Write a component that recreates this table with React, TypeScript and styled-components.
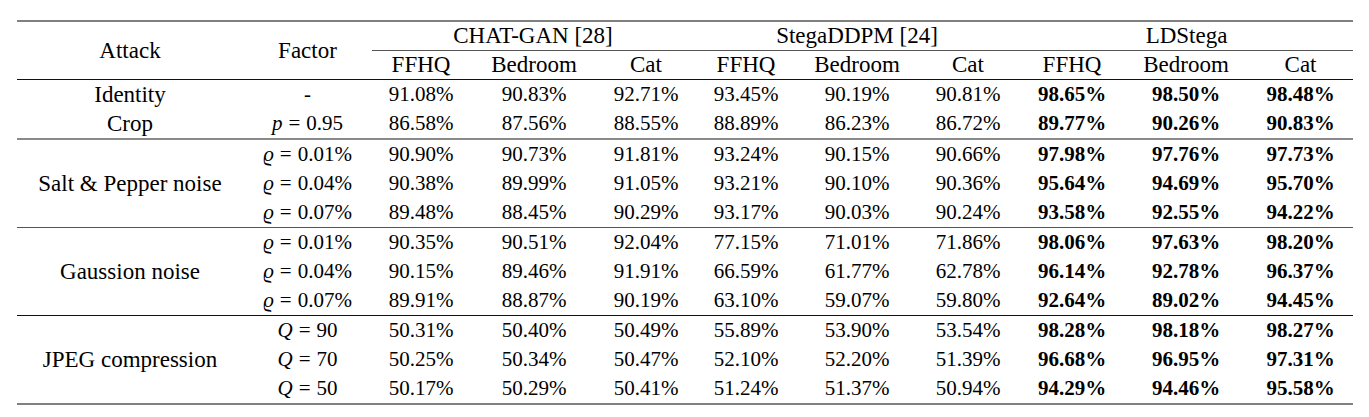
import React from "react";
import styled, { createGlobalStyle, css } from "styled-components";

const GlobalStyle = createGlobalStyle`
  html, body {
    margin: 0;
    padding: 0;
    background: #ffffff;
  }
  body {
    font-family: "Liberation Serif", "DejaVu Serif", serif;
    color: #000;
  }
`;

type Rule = "thickGray" | "thinGray" | "black";

interface Factor {
  v?: string;
  rest?: string;
}

interface Group {
  attack: string;
  rule: Rule;
  rows: { factor: Factor; values: string[] }[];
}

const colWidths = [226, 129, 98, 128, 96, 104, 118, 104, 104, 124, 105];

const methods = ["CHAT-GAN [28]", "StegaDDPM [24]", "LDStega"];
const datasets = ["FFHQ", "Bedroom", "Cat"];

const groups: Group[] = [
  {
    attack: "",
    rule: "black",
    rows: [
      { factor: {}, values: ["91.08%", "90.83%", "92.71%", "93.45%", "90.19%", "90.81%", "98.65%", "98.50%", "98.48%"] },
      { factor: { v: "p", rest: "0.95" }, values: ["86.58%", "87.56%", "88.55%", "88.89%", "86.23%", "86.72%", "89.77%", "90.26%", "90.83%"] },
    ],
  },
  {
    attack: "Salt & Pepper noise",
    rule: "thickGray",
    rows: [
      { factor: { v: "ϱ", rest: "0.01%" }, values: ["90.90%", "90.73%", "91.81%", "93.24%", "90.15%", "90.66%", "97.98%", "97.76%", "97.73%"] },
      { factor: { v: "ϱ", rest: "0.04%" }, values: ["90.38%", "89.99%", "91.05%", "93.21%", "90.10%", "90.36%", "95.64%", "94.69%", "95.70%"] },
      { factor: { v: "ϱ", rest: "0.07%" }, values: ["89.48%", "88.45%", "90.29%", "93.17%", "90.03%", "90.24%", "93.58%", "92.55%", "94.22%"] },
    ],
  },
  {
    attack: "Gaussion noise",
    rule: "thinGray",
    rows: [
      { factor: { v: "ϱ", rest: "0.01%" }, values: ["90.35%", "90.51%", "92.04%", "77.15%", "71.01%", "71.86%", "98.06%", "97.63%", "98.20%"] },
      { factor: { v: "ϱ", rest: "0.04%" }, values: ["90.15%", "89.46%", "91.91%", "66.59%", "61.77%", "62.78%", "96.14%", "92.78%", "96.37%"] },
      { factor: { v: "ϱ", rest: "0.07%" }, values: ["89.91%", "88.87%", "90.19%", "63.10%", "59.07%", "59.80%", "92.64%", "89.02%", "94.45%"] },
    ],
  },
  {
    attack: "JPEG compression",
    rule: "black",
    rows: [
      { factor: { v: "Q", rest: "90" }, values: ["50.31%", "50.40%", "50.49%", "55.89%", "53.90%", "53.54%", "98.28%", "98.18%", "98.27%"] },
      { factor: { v: "Q", rest: "70" }, values: ["50.25%", "50.34%", "50.47%", "52.10%", "52.20%", "51.39%", "96.68%", "96.95%", "97.31%"] },
      { factor: { v: "Q", rest: "50" }, values: ["50.17%", "50.29%", "50.41%", "51.24%", "51.37%", "50.94%", "94.29%", "94.46%", "95.58%"] },
    ],
  },
];

const ruleStyles: Record<Rule, ReturnType<typeof css>> = {
  thickGray: css`border-top: 2px solid #8a8a8a;`,
  thinGray: css`border-top: 1px solid #555555;`,
  black: css`border-top: 1px solid #111111;`,
};

const Page = styled.div`
  padding: 20px 16px 11px 17px;
`;

const Table = styled.table`
  border-collapse: collapse;
  table-layout: fixed;
  width: 1336px;
  font-family: "Liberation Serif", "DejaVu Serif", serif;
  color: #000;
  border-top: 2px solid #808080;
  border-bottom: 2px solid #808080;
`;

const HeadCell = styled.th<{ $underline?: boolean }>`
  font-weight: normal;
  font-size: 23px;
  height: 28px;
  line-height: 28px;
  padding: 0;
  text-align: center;
  white-space: nowrap;
  ${(p) => p.$underline && css`border-bottom: 1px solid #555555;`}
`;

const Body = styled.tbody<{ $rule: Rule }>`
  ${(p) => ruleStyles[p.$rule]}
`;

const Row = styled.tr``;

const AttackCell = styled.td`
  font-size: 23px;
  text-align: center;
  vertical-align: middle;
  padding: 0;
  white-space: nowrap;
`;

const FactorCell = styled.td`
  font-size: 21px;
  height: 29px;
  line-height: 29px;
  text-align: center;
  padding: 0;
  white-space: nowrap;
`;

const ValueCell = styled.td<{ $best?: boolean }>`
  font-size: 21px;
  height: 29px;
  line-height: 29px;
  text-align: center;
  padding: 0;
  white-space: nowrap;
  font-weight: ${(p) => (p.$best ? 700 : 400)};
`;

const Var = styled.i`
  font-style: italic;
`;

const Eq = styled.span`
  padding: 0 6px;
`;

const FactorText = ({ factor }: { factor: Factor }) => {
  if (!factor.v) return <>-</>;
  return (
    <>
      <Var>{factor.v}</Var>
      <Eq>=</Eq>
      {factor.rest}
    </>
  );
};

export default function App() {
  return (
    <>
      <GlobalStyle />
      <Page>
        <Table>
          <colgroup>
            {colWidths.map((w, i) => (
              <col key={i} style={{ width: w }} />
            ))}
          </colgroup>
          <thead>
            <tr>
              <HeadCell rowSpan={2}>Attack</HeadCell>
              <HeadCell rowSpan={2}>Factor</HeadCell>
              {methods.map((m) => (
                <HeadCell key={m} colSpan={3} $underline>
                  {m}
                </HeadCell>
              ))}
            </tr>
            <tr>
              {methods.map((m) =>
                datasets.map((d) => <HeadCell key={m + d}>{d}</HeadCell>)
              )}
            </tr>
          </thead>
          {groups.map((g, gi) => (
            <Body key={gi} $rule={g.rule}>
              {g.rows.map((r, ri) => (
                <Row key={ri}>
                  {gi === 0 ? (
                    <AttackCell>{ri === 0 ? "Identity" : "Crop"}</AttackCell>
                  ) : (
                    ri === 0 && <AttackCell rowSpan={g.rows.length}>{g.attack}</AttackCell>
                  )}
                  <FactorCell>
                    <FactorText factor={r.factor} />
                  </FactorCell>
                  {r.values.map((v, vi) => (
                    <ValueCell key={vi} $best={vi >= 6}>
                      {v}
                    </ValueCell>
                  ))}
                </Row>
              ))}
            </Body>
          ))}
        </Table>
      </Page>
    </>
  );
}
